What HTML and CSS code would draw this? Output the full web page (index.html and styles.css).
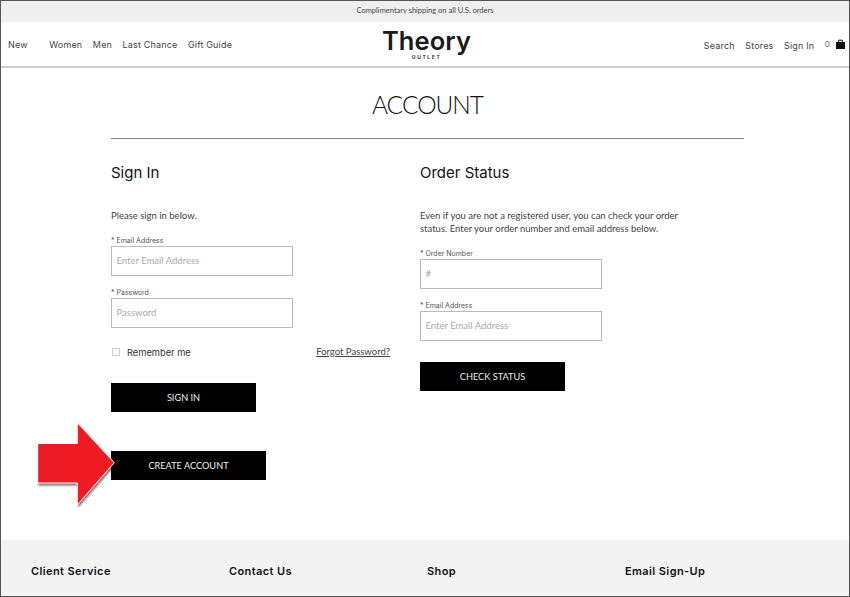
FILE: index.html
```html
<!doctype html>
<html>
<head>
<meta charset="UTF-8">
<title>Account</title>
<link rel="stylesheet" href="styles.css">
</head>
<body>
	<div class="page">
		<div class="promo">Complimentary shipping on all U.S. orders</div>
		<div class="header">
			<ul class="nav">
				<li class="nav-new"><a href="#">New</a></li>
				<li><a href="#">Women</a></li>
				<li><a href="#">Men</a></li>
				<li><a href="#">Last Chance</a></li>
				<li><a href="#">Gift Guide</a></li>
			</ul>
			<a class="logo" href="#">
				<span class="logo-name">Theory</span>
				<span class="logo-sub">OUTLET</span>
			</a>
			<ul class="nav nav-right">
				<li><a href="#">Search</a></li>
				<li><a href="#">Stores</a></li>
				<li><a href="#">Sign In</a></li>
				<li class="bag">
					<span class="bag-count">0</span>
					<svg width="9" height="10" viewBox="0 0 9 10"><path d="M0 3h9v7H0z" fill="#111"/><path d="M2.6 3V1.2h3.8V3" fill="none" stroke="#111"/></svg>
				</li>
			</ul>
		</div>
		<div class="main">
			<h1 class="title">ACCOUNT</h1>
			<div class="columns">
				<div class="col">
					<h2>Sign In</h2>
					<p class="intro">Please sign in below.</p>
					<label class="field">
						<span>* Email Address</span>
						<input type="text" placeholder="Enter Email Address">
					</label>
					<label class="field">
						<span>* Password</span>
						<input type="text" placeholder="Password">
					</label>
					<div class="remember">
						<label class="check"><i></i>Remember me</label>
						<a href="#">Forgot Password?</a>
					</div>
					<button class="btn btn-signin">SIGN IN</button>
					<button class="btn btn-create">CREATE ACCOUNT</button>
				</div>
				<div class="col">
					<h2>Order Status</h2>
					<p class="intro">Even if you are not a registered user, you can check your order status. Enter your order number and email address below.</p>
					<label class="field">
						<span>* Order Number</span>
						<input type="text" placeholder="#">
					</label>
					<label class="field">
						<span>* Email Address</span>
						<input type="text" placeholder="Enter Email Address">
					</label>
					<button class="btn btn-status">CHECK STATUS</button>
				</div>
			</div>
		</div>
		<div class="footer">
			<div>Client Service</div>
			<div>Contact Us</div>
			<div>Shop</div>
			<div>Email Sign-Up</div>
		</div>
		<!-- red arrow added over the screenshot -->
		<svg class="arrow" width="90" height="96" viewBox="0 0 90 96">
			<polygon points="0.7,21.5 40.3,21.5 40.3,0.7 77.3,40.7 40.3,83 40.3,61 0.7,61" fill="#ed1c24" stroke="#fff" stroke-width="1"/>
		</svg>
	</div>
</body>
</html>
```

FILE: styles.css
```css
*{margin:0;padding:0;box-sizing:border-box;}
html,body{height:100%;overflow:hidden;}
body{font-family:"Lato","Liberation Sans",sans-serif;font-size:9.5px;color:#333;background:#fff;}
ul,li{list-style:none;}
a{text-decoration:none;color:inherit;}
/*page start*/
.page{position:relative;width:850px;height:597px;border:1px solid #555;display:flex;flex-direction:column;overflow:hidden;}
/*promo*/
.promo{height:21px;flex:none;background:#efefef;text-align:center;line-height:20px;font-size:7.5px;color:#444;}
/*header start*/
.header{height:46px;flex:none;display:grid;grid-template-columns:1fr auto 1fr;align-items:center;padding:0 4px 0 7px;border-bottom:2px solid #ccc;}
.nav{display:flex;align-items:center;gap:10.5px;font-family:"Inter",sans-serif;font-size:9px;letter-spacing:.17px;color:#444;}
.nav .nav-new{margin-right:11px;}
.nav-right{justify-content:flex-end;padding-top:2px;}
.bag{display:flex;align-items:center;gap:6px;padding-bottom:3px;}
.bag-count{font-size:8px;color:#666;}
.logo{display:flex;flex-direction:column;align-items:center;font-family:"Inter",sans-serif;color:#1a1a1a;}
.logo-name{font-size:25.5px;font-weight:600;line-height:24px;letter-spacing:.1px;}
.logo-sub{font-size:5px;font-weight:600;letter-spacing:1.6px;line-height:6px;margin-top:1px;}
/*main start*/
.main{flex:1;padding:0 105px 0 110px;}
.title{font-size:24.5px;font-weight:300;letter-spacing:-1px;text-align:center;color:#111;line-height:30px;padding:22px 0 17px;height:71px;border-bottom:1px solid #888;}
.columns{display:flex;}
.col{width:309px;}
.col h2{font-family:"Inter",sans-serif;font-size:15px;font-weight:400;color:#111;line-height:20px;margin-top:24px;}
.intro{width:270px;font-size:9.5px;line-height:13px;color:#444;margin-top:26px;margin-bottom:14px;}
.field{display:block;margin-bottom:12px;}
.field span{display:block;font-family:"Inter",sans-serif;font-size:7px;line-height:10px;color:#555;}
.field input{display:block;width:181.5px;height:30px;border:1px solid #bbb;padding:0 4.5px 2px;font-family:inherit;font-size:9.5px;outline:none;border-radius:0;}
.field input::placeholder{color:#aaa;}
.remember{display:flex;justify-content:space-between;align-items:center;width:279px;margin-top:12px;height:24px;}
.check{display:flex;align-items:center;font-family:"Inter",sans-serif;font-size:9.3px;color:#333;}
.check i{width:8px;height:8px;border:1px solid #ccc;margin:0 7px 0 1px;}
.remember a{text-decoration:underline;font-size:9.5px;color:#444;padding-bottom:2px;}
.btn{display:block;border:0;background:#000;color:#eee;font-family:inherit;font-size:9.2px;padding-bottom:1px;height:29px;width:145px;border-radius:0;}
.btn-signin{margin-top:19px;}
.btn-create{margin-top:39px;width:155px;}
.btn-status{margin-top:21px;}
/*footer start*/
.footer{height:56px;flex:none;background:#f4f3f4;display:grid;grid-template-columns:repeat(4,198px);padding:21px 0 0 30px;font-family:"Inter",sans-serif;font-size:11px;font-weight:600;letter-spacing:.4px;line-height:20px;color:#111;}
/*arrow*/
.arrow{position:absolute;left:36px;top:421px;}
.arrow polygon{filter:drop-shadow(1px 2px 1px rgba(0,0,0,.55));}
```
